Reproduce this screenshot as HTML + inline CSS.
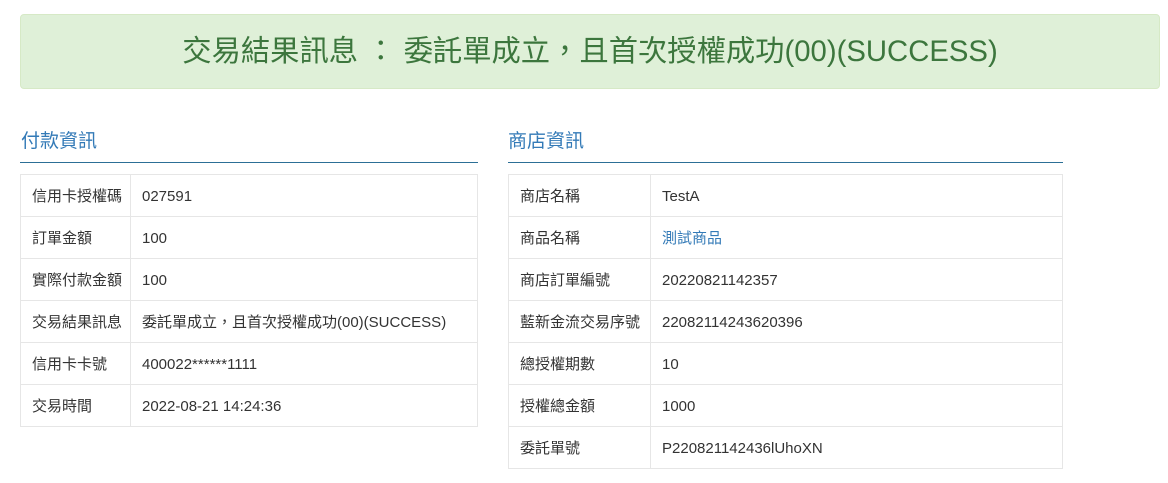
<!DOCTYPE html>
<html><head><meta charset="utf-8"><style>
body{margin:0;background:#fff;font-family:"Liberation Sans","Noto Sans CJK TC",sans-serif;color:#333;width:1168px;height:483px;overflow:hidden;position:relative}
.alert{position:absolute;left:20px;top:14px;width:1138px;height:73px;background:#dff0d8;border:1px solid #d6e9c6;border-radius:4px;color:#3c763d;font-size:29.3px;text-align:center;line-height:73px}
h3{position:absolute;margin:0;font-weight:normal;font-size:19px;color:#337ab7;top:126px}
.hr{position:absolute;top:162px;height:1px;background:#2c6f96}
table{position:absolute;top:174px;border-collapse:collapse;font-size:15px}
td{border:1px solid #e6e6e6;height:42px;padding:2px 0 0 11px;box-sizing:border-box;white-space:nowrap;line-height:20px}
</style></head><body>
<div class="alert">交易結果訊息 ： 委託單成立，且首次授權成功(00)(SUCCESS)</div>
<h3 style="left:21px">付款資訊</h3>
<div class="hr" style="left:20px;width:458px"></div>
<h3 style="left:508px">商店資訊</h3>
<div class="hr" style="left:508px;width:555px"></div>
<table style="left:20px;width:458px">
<tr><td style="width:110px">信用卡授權碼</td><td>027591</td></tr>
<tr><td>訂單金額</td><td>100</td></tr>
<tr><td>實際付款金額</td><td>100</td></tr>
<tr><td>交易結果訊息</td><td>委託單成立，且首次授權成功(00)(SUCCESS)</td></tr>
<tr><td>信用卡卡號</td><td>400022******1111</td></tr>
<tr><td>交易時間</td><td>2022-08-21 14:24:36</td></tr>
</table>
<table style="left:508px;width:555px">
<tr><td style="width:142px">商店名稱</td><td>TestA</td></tr>
<tr><td>商品名稱</td><td style="color:#337ab7">測試商品</td></tr>
<tr><td>商店訂單編號</td><td>20220821142357</td></tr>
<tr><td>藍新金流交易序號</td><td>22082114243620396</td></tr>
<tr><td>總授權期數</td><td>10</td></tr>
<tr><td>授權總金額</td><td>1000</td></tr>
<tr><td>委託單號</td><td>P220821142436lUhoXN</td></tr>
</table>
</body></html>
